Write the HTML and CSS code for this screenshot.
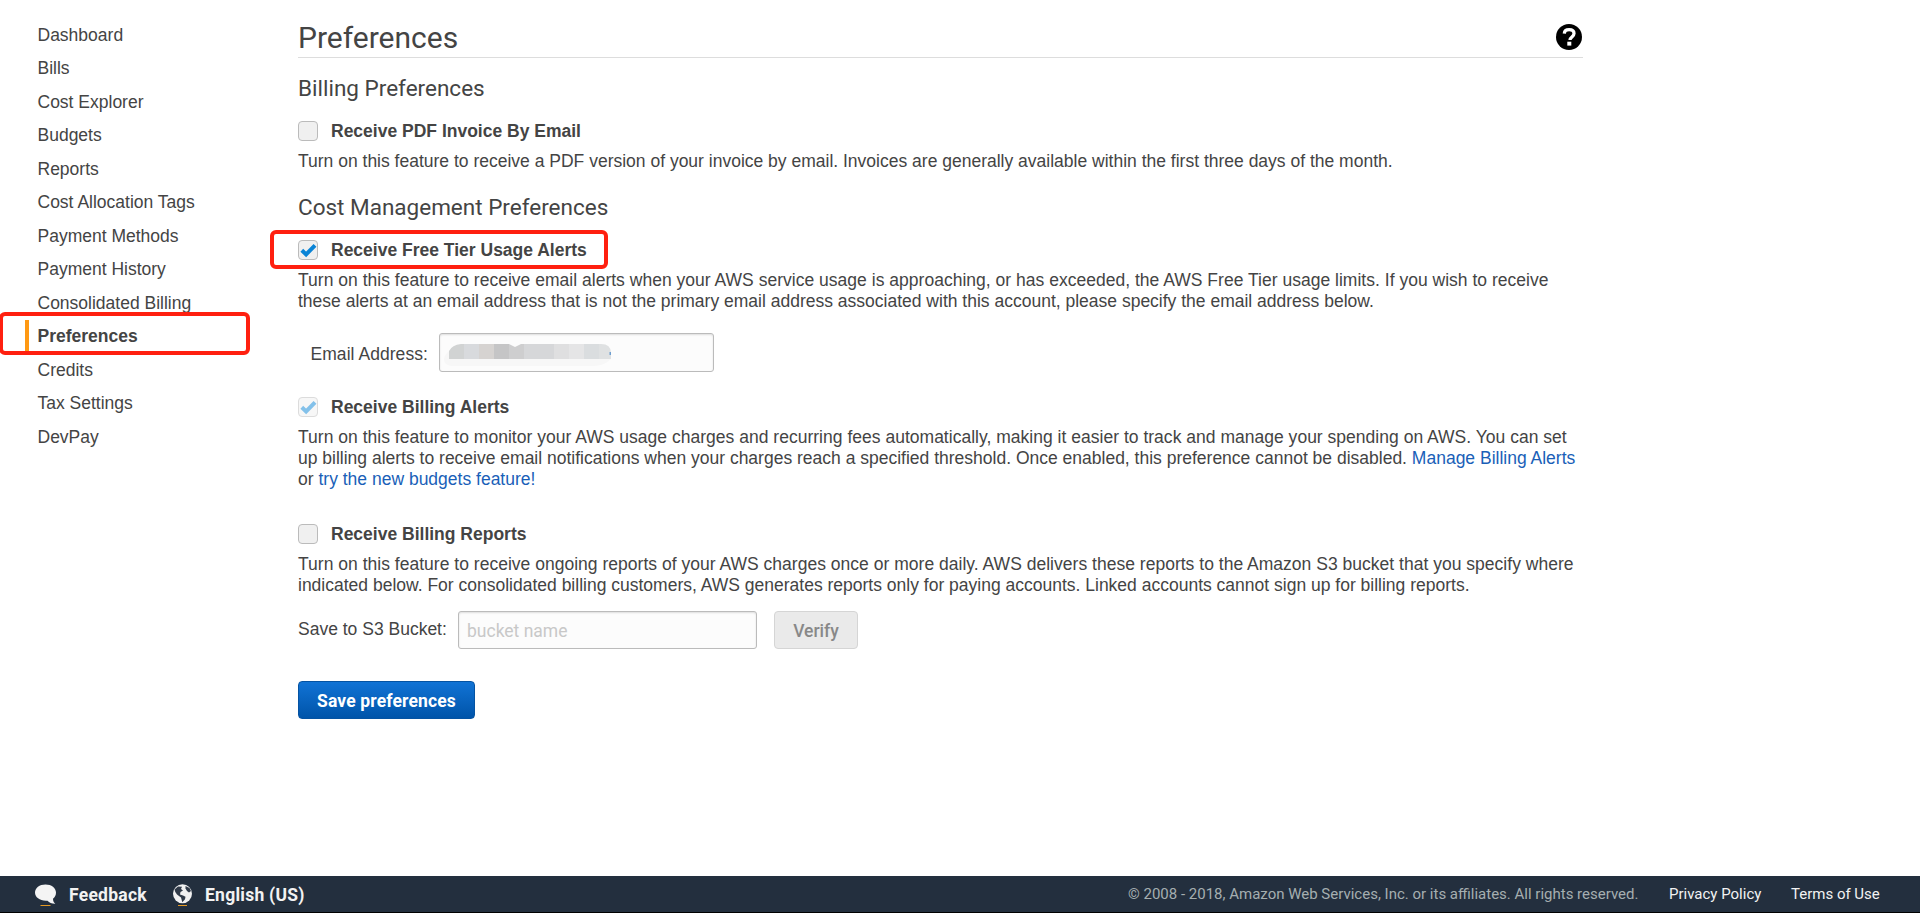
FILE: index.html
```html
<!DOCTYPE html>
<html lang="en">
<head>
<meta charset="utf-8">
<title>Preferences</title>
<link rel="stylesheet" href="styles.css">
</head>
<body>
<div class="page">
  <div class="columns">
    <nav class="nav">
      <a>Dashboard</a>
      <a>Bills</a>
      <a>Cost Explorer</a>
      <a>Budgets</a>
      <a>Reports</a>
      <a>Cost Allocation Tags</a>
      <a>Payment Methods</a>
      <a>Payment History</a>
      <a>Consolidated Billing</a>
      <a class="current">Preferences<span class="mark mark-nav"></span></a>
      <a>Credits</a>
      <a>Tax Settings</a>
      <a>DevPay</a>
    </nav>
    <main class="content">
      <header class="title-row">
        <h1>Preferences</h1>
        <svg class="help" viewBox="0 0 26 26"><circle cx="13" cy="13" r="13"/><path d="M8.300 9.600C8.500 6.900 10.300 5.700 13.100 5.700c2.900 0 4.900 1.500 4.900 3.900 0 3.400-4 3.300-4 6.400" fill="none" stroke="#fff" stroke-width="3.300"/><rect x="11.300" y="17.700" width="4" height="3.900" fill="#fff"/></svg>
      </header>

      <h2>Billing Preferences</h2>
      <section class="option option-invoice">
        <div class="check-row"><span class="check"></span><b>Receive PDF Invoice By Email</b></div>
        <p>Turn on this feature to receive a PDF version of your invoice by email. Invoices are generally available within the first three days of the month.</p>
      </section>

      <h2>Cost Management Preferences</h2>
      <section class="option">
        <div class="check-row"><span class="check"><svg viewBox="0 0 20 20"><path d="M3.800 10.300 8.100 14.400 17 5.300"/></svg></span><b>Receive Free Tier Usage Alerts</b><span class="mark mark-option"></span></div>
        <p class="long">Turn on this feature to receive email alerts when your AWS service usage is approaching, or has exceeded, the AWS Free Tier usage limits. If you wish to receive<br>these alerts at an email address that is not the primary email address associated with this account, please specify the email address below.</p>
        <div class="field-row email-row">
          <span class="label">Email Address:</span>
          <div class="input email">
            <svg class="redacted" viewBox="0 0 168 24">
              <path d="M5 7Q0 11 0 16t8 6h142q10 0 17-7V8z" fill="#f7f7f7"/>
              <clipPath id="smudge"><path d="M5 15V7Q8 1 17 0h48l6 3 6-3h80q10 0 10 9v6z"/></clipPath>
              <g clip-path="url(#smudge)">
                <path d="M5 0h15v15H5z" fill="#d1d3d3"/><path d="M20 0h15v15H20z" fill="#d8dadd"/>
                <path d="M35 0h15v15H35z" fill="#d6d3d1"/><path d="M50 0h15v15H50z" fill="#c5c5c6"/>
                <path d="M65 0h15v15H65z" fill="#cececf"/><path d="M80 0h30v15H80z" fill="#d6d7d9"/>
                <path d="M110 0h15v15h-15z" fill="#dfdfe0"/><path d="M125 0h15v15h-15z" fill="#e5e5e6"/>
                <path d="M140 0h15v15h-15z" fill="#dadddf"/><path d="M155 0h12v15h-12z" fill="#dfe1e2"/>
              </g>
              <path d="M165.500 8h1.500v3h-1.500z" fill="#6f9fd0"/>
            </svg>
          </div>
        </div>
      </section>

      <section class="option option-alerts">
        <div class="check-row"><span class="check disabled"><svg viewBox="0 0 20 20"><path d="M3.800 10.300 8.100 14.400 17 5.300"/></svg></span><b>Receive Billing Alerts</b></div>
        <p class="long">Turn on this feature to monitor your AWS usage charges and recurring fees automatically, making it easier to track and manage your spending on AWS. You can set<br>up billing alerts to receive email notifications when your charges reach a specified threshold. Once enabled, this preference cannot be disabled. <a>Manage Billing Alerts</a><br>or <a>try the new budgets feature!</a></p>
      </section>

      <section class="option">
        <div class="check-row"><span class="check"></span><b>Receive Billing Reports</b></div>
        <p class="long">Turn on this feature to receive ongoing reports of your AWS charges once or more daily. AWS delivers these reports to the Amazon S3 bucket that you specify where<br>indicated below. For consolidated billing customers, AWS generates reports only for paying accounts. Linked accounts cannot sign up for billing reports.</p>
        <div class="field-row bucket-row">
          <span class="label">Save to S3 Bucket:</span>
          <div class="input bucket">bucket name</div>
          <div class="button verify">Verify</div>
        </div>
      </section>

      <div class="button save">Save preferences</div>
    </main>
  </div>

  <footer class="footer">
    <svg class="foot-icon" viewBox="0 0 22 23"><path d="M10.500 0.500C16.500 0.500 21 4 21 8.600c0 2.700-1.100 4.700-3 6.100 0 2.300.8 3.800 2.300 5-3.300.1-6-1-7.800-3-7 .7-12.500-3-12.500-8.100C0 4 4.500.5 10.500.5z" fill="#f4f4f4"/><path d="M5.500 21.500h10" stroke="#e59a24"/></svg>
    <span class="foot-link feedback">Feedback</span>
    <svg class="foot-icon globe" viewBox="0 0 22 23"><circle cx="10.500" cy="9.800" r="9.500" fill="#f1f1f1"/><path d="M2.500 5.500 6 2.500l4 .3-1 2.200 2 1.600L8.500 8 8 10.500l3 1 2.500 1.200-.5 2.500-2.700 3-1.300-4.700L5 10.500 3.300 8z" fill="#303a48"/><path d="m13.500 2 4 2 1.500 3-2 1.500-2-1.500-1.500-2.500z" fill="#303a48"/><path d="M6 21.500h9" stroke="#e59a24"/></svg>
    <span class="foot-link language">English (US)</span>
    <span class="copyright">© 2008 - 2018, Amazon Web Services, Inc. or its affiliates. All rights reserved.</span>
    <span class="legal privacy">Privacy Policy</span>
    <span class="legal terms">Terms of Use</span>
  </footer>
</div>
</body>
</html>
```

FILE: styles.css
```css
* { box-sizing: border-box; }
body {
  margin: 0;
  background: #fff;
  color: #444;
  font: 17.5px/21px "Liberation Sans", Arial, sans-serif;
}
.page { display: flex; flex-direction: column; height: 913px; overflow: hidden; }
.columns { display: flex; flex: 1; }

.nav { width: 298px; padding-top: 18.5px; }
.nav a {
  display: block;
  position: relative;
  height: 33.5px;
  padding-left: 37.5px;
  line-height: 32.5px;
}
.nav .current { font-weight: bold; }
.nav .current::before {
  content: "";
  position: absolute;
  left: 25px;
  top: 0;
  width: 4px;
  height: 31px;
  background: #ff9913;
}

.mark { position: absolute; border: 4px solid #ff2010; border-radius: 6px; }
.mark-nav { left: -1px; top: -8px; width: 250.5px; height: 43px; }
.mark-option { left: -28.5px; top: -10.5px; width: 338px; height: 39px; }

.content { width: 1285px; }
.title-row {
  display: flex;
  justify-content: space-between;
  height: 58px;
  border-bottom: 1px solid #ddd;
}
h1, h2 { margin: 0; font-family: Roboto, sans-serif; font-weight: 400; white-space: nowrap; }
h1 { padding-top: 20px; font-size: 30px; line-height: 36px; }
h2 { height: 32px; font-size: 22.5px; line-height: 30px; }
.title-row + h2 { margin-top: 15px; }
.help { width: 26px; height: 26px; margin: 24px 1.5px 0 0; }

.option { padding-top: 16px; }
.option-invoice { height: 88px; }
.option-invoice + h2 { margin-top: -1px; }
.check-row { display: flex; position: relative; height: 20px; }
.check-row b { margin-left: 13px; line-height: 20px; white-space: nowrap; }
.check { width: 20px; height: 20px; border: 1px solid #bbb; border-radius: 4px; background: #f0f0f0; }
.check svg { display: block; width: 20px; height: 20px; margin: -1px; }
.check path { fill: none; stroke: #0a84d6; stroke-width: 4; }
.check.disabled { opacity: 0.5; }
p { margin: 10px 0 0; white-space: nowrap; }
p a { color: #1a5fb8; }
.long::first-line { letter-spacing: 0.016px; }

.field-row { display: flex; }
.email-row { height: 39px; margin: 21px 0 0 12.5px; }
.label { white-space: nowrap; }
.email-row .label { width: 128.5px; line-height: 42px; letter-spacing: 0.05px; }
.input {
  border: 1px solid #bbb;
  border-radius: 3px;
  background: #fcfcfc;
  box-shadow: inset 0 1px 2px #ddd;
}
.email { width: 275px; height: 39px; }
.redacted { display: block; width: 168px; height: 24px; margin: 10px 0 0 4px; }
.option-alerts { padding-top: 25px; height: 136px; }
.option-alerts + .option { padding-top: 16px; }
.bucket-row { margin-top: 15px; }
.bucket-row .label { width: 160px; line-height: 36px; }
.bucket {
  width: 299px;
  height: 38px;
  padding-left: 8px;
  color: #c8c8c8;
  font: 17.5px/38px Roboto, sans-serif;
}
.button {
  height: 38px;
  border-radius: 4px;
  font: 500 17.5px/38px Roboto, sans-serif;
  text-align: center;
  white-space: nowrap;
}
.verify { width: 84px; margin-left: 17px; border: 1px solid #d5d5d5; background: #eaeaea; color: #888; }
.save {
  width: 177px;
  margin-top: 32px;
  border: 1px solid #0553a2;
  background: linear-gradient(#1173d5, #0054a9);
  color: #fff;
  font-weight: 700;
  letter-spacing: 0.14px;
}

.footer {
  display: flex;
  height: 37px;
  padding-left: 35px;
  border-bottom: 1px solid #000;
  background: #232f3e;
  color: #f2f2f2;
  font: 15px/36px Roboto, sans-serif;
  white-space: nowrap;
}
.foot-icon { width: 22px; height: 23px; margin-top: 8px; }
.foot-link { font-size: 17.5px; font-weight: 700; line-height: 38px; letter-spacing: 0.25px; }
.feedback { width: 91px; margin-left: 12px; }
.globe { margin-left: 12px; }
.language { margin-left: 11px; }
.copyright { margin-left: auto; width: 541px; color: #a5aeb0; }
.privacy { width: 122px; }
.terms { width: 129px; }
```
